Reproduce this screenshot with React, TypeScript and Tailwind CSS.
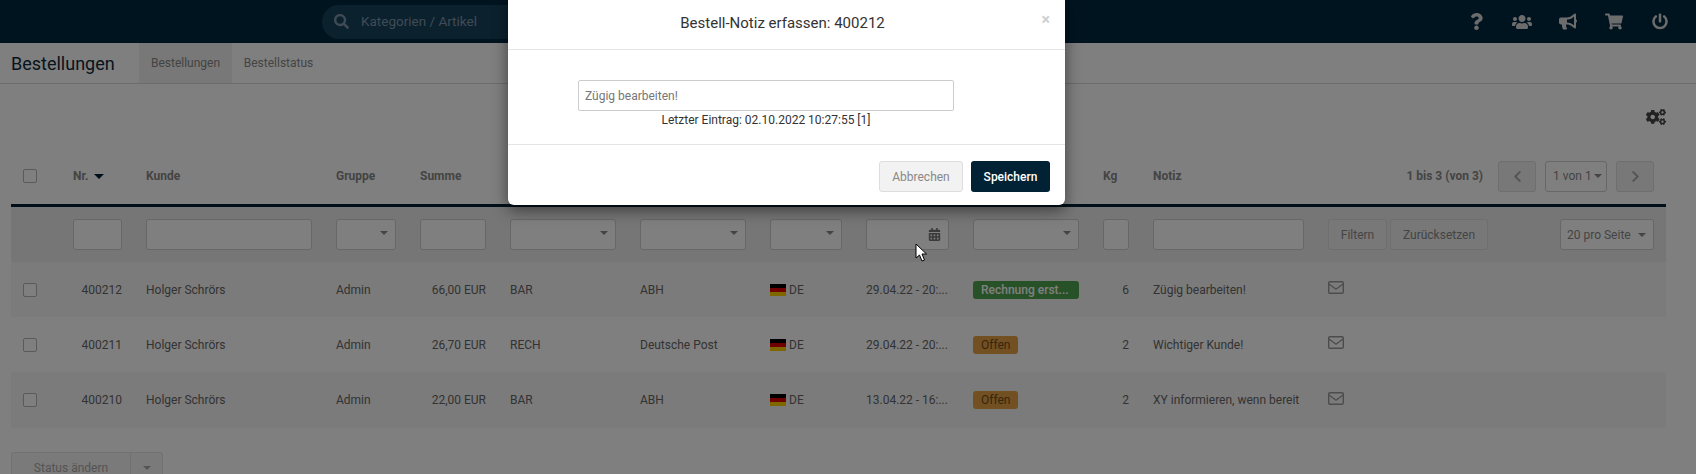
import React from 'react'
import {
  FaQuestion,
  FaUsers,
  FaBullhorn,
  FaShoppingCart,
  FaPowerOff,
  FaCogs,
  FaSearch,
  FaChevronLeft,
  FaChevronRight,
  FaCalendarAlt,
} from 'react-icons/fa'

// gleiche Spalten für Kopf, Filter und Zeilen
const COLS = 'grid grid-cols-[26px_49px_166px_60px_66px_106px_106px_72px_83px_106px_26px_151px_326px] gap-x-6 pl-3 pr-3 items-center'
const FIELD = 'h-[31px] rounded-[3px] border border-[#cfcfcf] bg-white'
const BTN = 'h-[31px] rounded-[3px] border border-[#dcdcdc] bg-[#f0f0f0] flex items-center justify-center text-[12px] text-[#8a8a8a]'

type Row = {
  nr: string
  sum: string
  pay: string
  ship: string
  date: string
  status: string
  green: boolean
  kg: string
  note: string
}

const ROWS: Row[] = [
  { nr: '400212', sum: '66,00 EUR', pay: 'BAR', ship: 'ABH', date: '29.04.22 - 20:...', status: 'Rechnung erst...', green: true, kg: '6', note: 'Zügig bearbeiten!' },
  { nr: '400211', sum: '26,70 EUR', pay: 'RECH', ship: 'Deutsche Post', date: '29.04.22 - 20:...', status: 'Offen', green: false, kg: '2', note: 'Wichtiger Kunde!' },
  { nr: '400210', sum: '22,00 EUR', pay: 'BAR', ship: 'ABH', date: '13.04.22 - 16:...', status: 'Offen', green: false, kg: '2', note: 'XY informieren, wenn bereit' },
]

function Caret({ className }: { className?: string }) {
  return (
    <svg width="8" height="4" viewBox="0 0 8 4" className={className}>
      <path d="M0 0h8L4 4z" fill="currentColor" />
    </svg>
  )
}

function SelectBox() {
  return (
    <div className={`${FIELD} flex items-center justify-end pr-[7px] pb-[3px] text-[#888]`}>
      <Caret />
    </div>
  )
}

function CheckBox() {
  return <div className="w-[14px] h-[14px] rounded-[2px] border border-[#b5b5b5] bg-white" />
}

function Flag() {
  return (
    <div className="w-4 h-3 flex flex-col">
      <div className="flex-1 bg-black" />
      <div className="flex-1 bg-[#dd0000]" />
      <div className="flex-1 bg-[#ffce00]" />
    </div>
  )
}

function Envelope() {
  return (
    <svg width="16" height="13" viewBox="0 0 16 13" fill="none" stroke="currentColor" strokeWidth="1.4">
      <rect x="0.7" y="0.7" width="14.6" height="11.6" rx="1.2" />
      <path d="M1 3l7 5.2L15 3" />
    </svg>
  )
}

function TopBar() {
  return (
    <div className="h-[43px] bg-[#002840] flex items-center">
      <div className="ml-[322px] w-[240px] h-[34px] rounded-full bg-[#17425c] flex items-center pl-3 gap-3 text-[#7f97a8]">
        <FaSearch size={15} />
        <span className="text-[13.5px]">Kategorien / Artikel</span>
      </div>
      <div className="ml-auto pr-[28px] flex items-center gap-[30px] text-[#d8d8d8] [&>div]:w-4 [&>div]:flex [&>div]:justify-center">
        <div>
          <FaQuestion className="w-[13px] h-[17px]" />
        </div>
        <div>
          <FaUsers className="w-5 h-[16px] shrink-0" />
        </div>
        <div>
          <FaBullhorn className="w-[18px] h-[17px] shrink-0" />
        </div>
        <div>
          <FaShoppingCart className="w-[18px] h-[17px] shrink-0" />
        </div>
        <div>
          <FaPowerOff className="w-4 h-[17px]" />
        </div>
      </div>
    </div>
  )
}

function SubBar() {
  return (
    <div className="h-[41px] border-b border-[#d9d9d9] flex items-stretch">
      <div className="pl-[11px] w-[139px] flex items-center text-[18px] text-[#0f2a3d]">Bestellungen</div>
      <div className="w-[93px] bg-[#f0f0f0] flex items-center justify-center text-[12px] text-[#888]">Bestellungen</div>
      <div className="w-[93px] flex items-center justify-center text-[12px] text-[#888]">Bestellstatus</div>
    </div>
  )
}

function Modal() {
  return (
    <div className="absolute left-[508px] top-[-6px] w-[557px] h-[211px] z-20 bg-white rounded-[6px] shadow-[0_5px_15px_rgba(0,0,0,0.5)] flex flex-col">
      <div className="h-[56px] shrink-0 border-b border-[#e5e5e5] pt-[4px] pr-[8px] flex items-center justify-center relative text-[15px] text-[#333]">
        Bestell-Notiz erfassen: 400212
        <span className="absolute right-[15px] top-[16px] text-[16px] leading-5 font-bold text-[#d0d0d0]">×</span>
      </div>
      <div className="h-[95px] shrink-0 border-b border-[#e5e5e5] pt-[30px] pr-[41px] flex flex-col items-center">
        <div className="w-[376px] h-[31px] rounded-[2px] border border-[#ccc] flex items-center pl-[6px] text-[12px] text-[#777]">
          Zügig bearbeiten!
        </div>
        <div className="mt-[1px] text-[12px] leading-[17px] text-[#333]">Letzter Eintrag: 02.10.2022 10:27:55 [1]</div>
      </div>
      <div className="flex-1 flex justify-end items-start gap-2 pt-4 pr-[15px]">
        <div className="w-[84px] h-[31px] rounded-[3px] border border-[#ddd] bg-[#f2f2f2] flex items-center justify-center text-[12px] text-[#888]">
          Abbrechen
        </div>
        <div className="w-[79px] h-[31px] rounded-[3px] bg-[#012135] flex items-center justify-center text-[12px] font-medium text-white">
          Speichern
        </div>
      </div>
    </div>
  )
}

export default function App() {
  return (
    <div className="relative w-[1696px] h-[474px] overflow-hidden bg-white font-['Roboto',sans-serif] text-[12px] text-[#666]">
      <TopBar />
      <SubBar />

      <div className="h-[64px] pr-[30px] pt-[23px] flex justify-end items-start text-[#444]">
        <FaCogs size={20} />
      </div>

      <div className="mx-[11px] w-[1655px]">
        {/* Kopfzeile */}
        <div className={`${COLS} h-[56px] border-b-[3px] border-[#012135] box-content font-bold text-[#888]`}>
          <CheckBox />
          <div className="flex items-center gap-[6px]">
            Nr.
            <Caret className="w-[10px] h-[5px] text-[#012135]" />
          </div>
          <div>Kunde</div>
          <div>Gruppe</div>
          <div>Summe</div>
          <div />
          <div />
          <div />
          <div />
          <div />
          <div>Kg</div>
          <div>Notiz</div>
          <div className="flex items-center justify-end font-bold">
            <span className="mr-[15px]">1 bis 3 (von 3)</span>
            <div className={`${BTN} w-[38px] text-[#aaa]`}>
              <FaChevronLeft size={13} />
            </div>
            <div className={`${FIELD} mx-[9px] w-[62px] flex items-center pl-[7px] gap-[2px] text-[12px] font-normal border-[#aaa] text-[#888]`}>
              1 von 1
              <Caret />
            </div>
            <div className={`${BTN} w-[38px] text-[#aaa]`}>
              <FaChevronRight size={13} />
            </div>
          </div>
        </div>

        {/* Filterzeile */}
        <div className={`${COLS} h-[55px] bg-[#ececec]`}>
          <div />
          <div className={FIELD} />
          <div className={FIELD} />
          <SelectBox />
          <div className={FIELD} />
          <SelectBox />
          <SelectBox />
          <SelectBox />
          <div className={`${FIELD} flex items-center justify-end pr-[7px] text-[#777]`}>
            <FaCalendarAlt size={13} />
          </div>
          <SelectBox />
          <div className={FIELD} />
          <div className={FIELD} />
          <div className="flex items-center">
            <div className={`${BTN} w-[59px]`}>Filtern</div>
            <div className={`${BTN} w-[98px] ml-[3px]`}>Zurücksetzen</div>
            <div className={`${FIELD} w-[94px] ml-auto flex items-center justify-between pl-[6px] pr-[7px] text-[#888]`}>
              20 pro Seite
              <Caret />
            </div>
          </div>
        </div>

        {/* Zeilen */}
        {ROWS.map((r, i) => (
          <div key={r.nr} className={`${COLS} ${i === 2 ? 'h-[56px]' : 'h-[55px]'} ${i === 1 ? 'bg-white' : 'bg-[#f7f7f7]'}`}>
            <CheckBox />
            <div className="text-right">{r.nr}</div>
            <div>Holger Schrörs</div>
            <div>Admin</div>
            <div className="text-right">{r.sum}</div>
            <div>{r.pay}</div>
            <div>{r.ship}</div>
            <div className="flex items-center gap-[3px]">
              <Flag />
              DE
            </div>
            <div className="whitespace-nowrap">{r.date}</div>
            <div>
              <span
                className={`inline-flex items-center h-[18px] rounded-[3px] px-2 ${
                  r.green ? 'w-full font-medium bg-[#4fa34f] text-white' : 'bg-[#e5a045] text-[#6e4c1c]'
                }`}
              >
                {r.status}
              </span>
            </div>
            <div className="text-right">{r.kg}</div>
            <div className="whitespace-nowrap">{r.note}</div>
            <div className="text-[#999] pb-[4px]">
              <Envelope />
            </div>
          </div>
        ))}

        <div className="mt-6 flex h-[31px]">
          <div className="w-[120px] rounded-l-[3px] border border-[#e2e2e2] bg-[#f4f4f4] flex items-center justify-center text-[#aaa]">
            Status ändern
          </div>
          <div className="w-[32px] rounded-r-[3px] border border-l-0 border-[#e2e2e2] bg-[#f4f4f4] flex items-center justify-center text-[#aaa]">
            <Caret />
          </div>
        </div>
      </div>

      {/* Abdunkelung + Dialog */}
      <div className="absolute inset-0 z-10 bg-black/50" />
      <Modal />

      <svg className="absolute left-[915px] top-[243px] z-30" width="13" height="19" viewBox="0 0 13 19">
        <path d="M1 1v14l3.5-3 2.5 6 2.5-1-2.5-6h4.5z" fill="#fff" stroke="#000" strokeWidth="1" />
      </svg>
    </div>
  )
}
